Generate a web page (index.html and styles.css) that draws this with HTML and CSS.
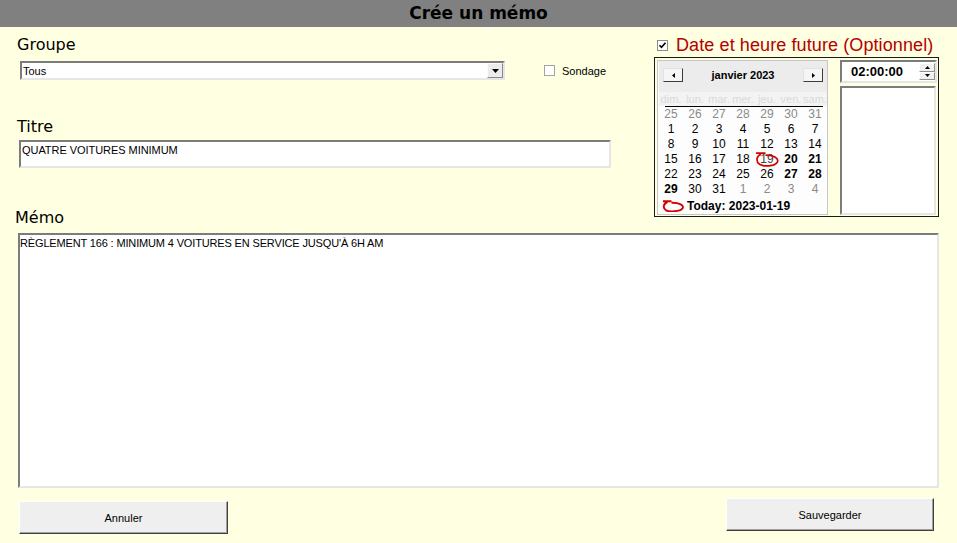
FILE: index.html
```html
<!DOCTYPE html>
<html lang="fr">
<head>
<meta charset="utf-8">
<title>Crée un mémo</title>
<link rel="stylesheet" href="styles.css">
</head>
<body>
<header class="titlebar">Crée un mémo</header>
<div class="top">
  <div class="left">
    <div class="label lbl-groupe">Groupe</div>
    <div class="group-row">
      <div class="select">
        <span class="select-text">Tous</span>
        <span class="select-btn"><svg width="7" height="4" viewBox="0 0 7 4"><path d="M0 0H7L3.5 4Z" fill="#000"/></svg></span>
      </div>
      <span class="cb cb-sondage"></span>
      <span class="cb-label">Sondage</span>
    </div>
    <div class="label lbl-titre">Titre</div>
    <div class="field titre-field">QUATRE VOITURES MINIMUM</div>
    <div class="label lbl-memo">Mémo</div>
  </div>
  <div class="right">
    <div class="date-check">
      <span class="cb cb-date"><svg width="9" height="9" viewBox="0 0 9 9"><path d="M1.5 4.2L3.5 6.3L7.5 1.8" fill="none" stroke="#000" stroke-width="1.6"/></svg></span>
      <span class="date-label">Date et heure future (Optionnel)</span>
    </div>
    <div class="calbox">
      <div class="month">
        <div class="month-head">
          <span class="navbtn nav-prev"><svg width="3" height="5" viewBox="0 0 3 5"><path d="M3 0V5L0 2.5Z" fill="#000"/></svg></span>
          <span class="month-title">janvier 2023</span>
          <span class="navbtn nav-next"><svg width="3" height="5" viewBox="0 0 3 5"><path d="M0 0V5L3 2.5Z" fill="#000"/></svg></span>
        </div>
        <div class="dow">
          <span>dim.</span><span>lun.</span><span>mar.</span><span>mer.</span><span>jeu.</span><span>ven.</span><span>sam.</span>
        </div>
        <div class="dow-line"></div>
        <div class="days">
          <span class="other">25</span><span class="other">26</span><span class="other">27</span><span class="other">28</span><span class="other">29</span><span class="other">30</span><span class="other">31</span>
          <span>1</span><span>2</span><span>3</span><span>4</span><span>5</span><span>6</span><span>7</span>
          <span>8</span><span>9</span><span>10</span><span>11</span><span>12</span><span>13</span><span>14</span>
          <span>15</span><span>16</span><span>17</span><span>18</span><span class="today">19<svg class="today-ring" width="24" height="15" viewBox="0 0 24 15"><path d="M1 1.2H10.5M6 2.2C1.5 3.6 0.5 9.5 4.5 12.3C9 15 19.5 14.3 22.3 10.2C24.2 6.5 19 3 10.5 3.2" fill="none" stroke="#d40000" stroke-width="1.7"/></svg></span><span class="bold">20</span><span class="bold">21</span>
          <span>22</span><span>23</span><span>24</span><span>25</span><span>26</span><span class="bold">27</span><span class="bold">28</span>
          <span class="bold">29</span><span>30</span><span>31</span><span class="other">1</span><span class="other">2</span><span class="other">3</span><span class="other">4</span>
        </div>
        <div class="today-row">
          <svg class="today-mark" width="22" height="12" viewBox="0 0 22 12"><path d="M1 1.3H9.5M5.5 2C1.5 3.2 0.4 8 4 10.3C8 12.2 18 11.5 20.6 8.3C22.3 5.3 17.5 2.6 9.5 2.8" fill="none" stroke="#d40000" stroke-width="1.9"/></svg>
          <span class="today-text">Today: 2023-01-19</span>
        </div>
      </div>
      <div class="timecol">
        <div class="timebox">
          <span class="time">02:00:00</span>
          <span class="spin">
            <span class="spin-btn"><svg width="5" height="3" viewBox="0 0 5 3"><path d="M0 3H5L2.5 0Z" fill="#000"/></svg></span>
            <span class="spin-btn"><svg width="5" height="3" viewBox="0 0 5 3"><path d="M0 0H5L2.5 3Z" fill="#000"/></svg></span>
          </span>
        </div>
        <div class="listbox"></div>
      </div>
    </div>
  </div>
</div>
<div class="field memo-field">RÈGLEMENT 166 : MINIMUM 4 VOITURES EN SERVICE JUSQU'À 6H AM</div>
<div class="buttons">
  <button class="btn btn-cancel">Annuler</button>
  <button class="btn btn-save">Sauvegarder</button>
</div>
</body>
</html>
```

FILE: styles.css
```css
* { box-sizing: border-box; }

body {
  margin: 0;
  width: 957px;
  height: 543px;
  overflow: hidden;
  background: #ffffe1;
  font-family: "Liberation Sans", Arial, sans-serif;
  color: #000;
}

.titlebar {
  height: 27px;
  background: #808080;
  text-align: center;
  font: bold 17px/27px "DejaVu Sans", sans-serif;
}

.top {
  display: flex;
  align-items: flex-start;
}

.left { width: 620px; }

.label {
  font: 16px/20px "DejaVu Sans", sans-serif;
}

.lbl-groupe { margin: 8px 0 0 17px; }

.group-row {
  display: flex;
  align-items: center;
  height: 19px;
  margin-top: 6px;
}

.select {
  margin-left: 20px;
  width: 485px;
  height: 19px;
  background: #fff;
  border: 2px solid;
  border-color: #7c7c7c #e6e6e6 #e6e6e6 #7c7c7c;
  display: flex;
  align-items: center;
  font-size: 11px;
}

.select-text { padding-left: 1px; }

.select-btn {
  margin-left: auto;
  width: 16px;
  height: 15px;
  background: #ececec;
  border: 1px solid;
  border-color: #fbfbfb #8a8a8a #8a8a8a #fbfbfb;
  display: flex;
  align-items: center;
  justify-content: center;
}

.cb {
  width: 11px;
  height: 11px;
  background: #fff;
  border: 1px solid #a4a4a4;
  display: flex;
  align-items: center;
  justify-content: center;
}

.cb-sondage { margin-left: 39px; }

.cb-label {
  margin-left: 7px;
  font-size: 11px;
}

.lbl-titre { margin: 37px 0 0 17px; }

.field {
  background: #fff;
  border: 2px solid;
  border-color: #7c7c7c #e6e6e6 #e6e6e6 #7c7c7c;
  font-size: 11px;
  line-height: 13px;
}

.titre-field {
  margin: 3px 0 0 19px;
  width: 592px;
  height: 28px;
  padding: 2px 0 0 1px;
  letter-spacing: -0.05px;
}

.lbl-memo { margin: 40px 0 0 15px; }

.right { margin-left: 34px; }

.date-check {
  display: flex;
  align-items: center;
  height: 20px;
  margin-top: 8px;
}

.cb-date {
  margin-left: 3px;
  width: 11px;
  height: 11px;
  border-color: #8c8c8c;
}

.date-label {
  margin-left: 8px;
  color: #b30000;
  font-size: 18px;
  line-height: 20px;
  letter-spacing: 0.1px;
}

.calbox {
  margin-top: 2px;
  width: 285px;
  height: 160px;
  border: 1px solid #1a1a1a;
  padding: 2px 1px 1px 2px;
  display: flex;
  gap: 12px;
}

.month {
  width: 171px;
  height: 155px;
  border: 1px solid #c6c6c6;
  padding-left: 1px;
  background: #fdfdfd;
}

.month-head {
  height: 31px;
  background: #ececec;
  display: flex;
  align-items: center;
  padding: 0 4px 3px 4px;
}

.navbtn {
  width: 20px;
  height: 14px;
  background: #f5f5f5;
  border: 1px solid;
  border-color: #e2e2e2 #3c3c3c #3c3c3c #e2e2e2;
  display: flex;
  align-items: center;
  justify-content: center;
}

.month-title {
  flex: 1;
  text-align: center;
  font-weight: bold;
  font-size: 11px;
}

.dow {
  height: 14px;
  background: #f3f3f3;
  display: grid;
  grid-template-columns: repeat(7, 24px);
  font-size: 11px;
  line-height: 14px;
  color: #dadada;
  text-align: center;
}

.dow-line {
  height: 1px;
  margin: 0 4px 0 6px;
  background: #000;
}

.days {
  display: grid;
  grid-template-columns: repeat(7, 24px);
  grid-auto-rows: 15px;
  font-size: 12px;
  line-height: 15px;
  text-align: center;
}

.days .other { color: #8a8a8a; }
.days .bold { font-weight: bold; }

.days .today {
  position: relative;
  color: #444;
}

.today-ring {
  position: absolute;
  left: 0;
  top: 0;
}

.today-row {
  height: 17px;
  display: flex;
  align-items: center;
}

.today-mark { margin-left: 3px; }

.today-text {
  margin-left: 3px;
  font-size: 12px;
  font-weight: bold;
}

.timecol {
  width: 97px;
  display: flex;
  flex-direction: column;
}

.timebox {
  height: 23px;
  background: #fff;
  border: 2px solid;
  border-color: #7c7c7c #e6e6e6 #e6e6e6 #7c7c7c;
  display: flex;
  align-items: center;
  padding-left: 9px;
}

.time {
  font-size: 13px;
  font-weight: bold;
}

.spin {
  margin-left: auto;
  width: 16px;
  height: 17px;
  display: flex;
  flex-direction: column;
}

.spin-btn {
  flex: 1;
  background: #f0f0f0;
  border: 1px solid;
  border-color: #fdfdfd #909090 #909090 #fdfdfd;
  display: flex;
  align-items: center;
  justify-content: center;
}

.listbox {
  margin-top: 3px;
  width: 96px;
  height: 129px;
  background: #fff;
  border: 2px solid;
  border-color: #7c7c7c #e6e6e6 #e6e6e6 #7c7c7c;
}

.memo-field {
  margin: 5px 0 0 18px;
  width: 921px;
  height: 255px;
  padding: 2px 0 0 0;
  letter-spacing: -0.15px;
}

.buttons {
  display: flex;
  justify-content: space-between;
  align-items: flex-start;
  padding: 0 23px 0 19px;
}

.btn {
  height: 33px;
  background: #efefef;
  border: 1px solid;
  border-color: #ffffff #404040 #404040 #ffffff;
  box-shadow: inset -1px -1px 0 #a0a0a0;
  font-family: "Liberation Sans", Arial, sans-serif;
  font-size: 11px;
  color: #000;
  padding: 0;
}

.btn-cancel {
  width: 209px;
  margin-top: 13px;
}

.btn-save {
  width: 208px;
  margin-top: 10px;
}
```
